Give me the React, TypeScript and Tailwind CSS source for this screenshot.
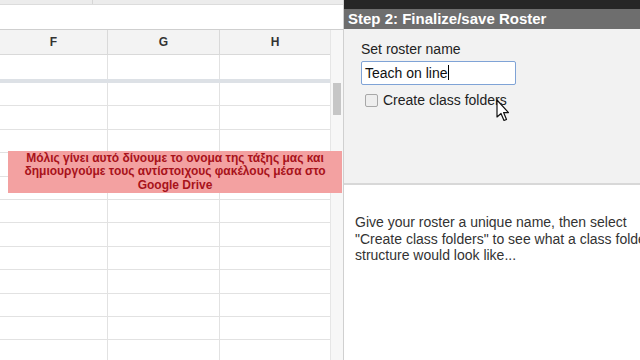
import React from 'react';

const rows = Array.from({ length: 12 });

const Cursor = () => (
  <svg width="16" height="24" viewBox="0 0 16 24" className="absolute left-[496px] top-[99px]">
    <path
      d="M1 1 L1 18 L5 14.5 L8 21.5 L10.5 20.5 L7.6 13.6 L12.5 13.6 Z"
      fill="#fff"
      stroke="#111"
      strokeWidth="1.2"
      strokeLinejoin="round"
    />
  </svg>
);

export default function App() {
  return (
    <div className="relative w-[640px] h-[360px] overflow-hidden bg-white flex font-['Liberation_Sans',Arial,sans-serif]">
      {/* sheet side */}
      <div className="w-[343px] flex flex-col shrink-0">
        <div className="h-[5px] shrink-0 bg-[#ececec] border-b border-[#dcdcdc] flex">
          <div className="w-[93px] border-r border-[#d6d6d6]" />
        </div>
        <div className="h-[25px] shrink-0 bg-white border-b border-[#cfcfcf]" />
        <div className="flex-1 min-h-0 overflow-hidden flex">
          <div className="flex-1 flex flex-col">
            <div className="h-[25px] shrink-0 bg-[#f3f3f3] border-b border-[#d9d9d9] flex text-[12px] font-bold text-[#333]">
              <div className="w-[108px] border-r border-[#d9d9d9] flex items-center justify-center">F</div>
              <div className="w-[112px] border-r border-[#d9d9d9] flex items-center justify-center">G</div>
              <div className="flex-1 flex items-center justify-center">H</div>
            </div>
            <div className="h-[28px] shrink-0 flex border-b-4 border-[#dde1e6]">
              <div className="w-[108px] border-r border-[#e2e2e2]" />
              <div className="w-[112px] border-r border-[#e2e2e2]" />
              <div className="flex-1" />
            </div>
            {rows.map((_, i) => (
              <div key={i} className="h-[23.4px] shrink-0 flex border-b border-[#e2e2e2]">
                <div className="w-[108px] border-r border-[#e2e2e2]" />
                <div className="w-[112px] border-r border-[#e2e2e2]" />
                <div className="flex-1" />
              </div>
            ))}
          </div>
          <div className="w-[13px] bg-[#f7f7f7] border-l border-[#e6e6e6] flex flex-col">
            <div className="h-[53px] shrink-0" />
            <div className="mx-[2px] h-[32px] shrink-0 bg-[#c6c6c6]" />
          </div>
        </div>
      </div>

      {/* side panel */}
      <div className="flex-1 flex flex-col border-l border-[#d0d0d0] min-w-0">
        <div className="h-[9px] shrink-0 bg-[#262626]" />
        <div className="h-[20px] shrink-0 bg-[#6e6e6e] text-white font-bold text-[15px] leading-[20px] pl-[4px] whitespace-nowrap">
          Step 2: Finalize/save Roster
        </div>
        <div className="h-[156px] shrink-0 bg-[#f2f2f2] border-b-2 border-[#d8d8d8] pl-[17px] pt-[11px] text-[14px] text-[#222]">
          <div className="leading-[18px]">Set roster name</div>
          <div className="mt-[3px] w-[155px] h-[24px] border border-[#7fa3d6] rounded-[2px] bg-white pl-[3px] leading-[22px] text-[14px] text-[#111]">
            Teach on line<span className="inline-block w-px h-[15px] bg-black align-[-2px]" />
          </div>
          <div className="mt-[7px] flex items-center pl-[4px]">
            <div className="w-[13px] h-[13px] border border-[#a8a8a8] rounded-[2px] bg-[#eeeeee]" />
            <span className="ml-[5px] leading-[16px]">Create class folders</span>
          </div>
        </div>
        <div className="pt-[29px] pl-[11px] text-[14px] leading-[16.5px] text-[#333] whitespace-nowrap">
          Give your roster a unique name, then select
          <br />
          "Create class folders" to see what a class folder
          <br />
          structure would look like...
        </div>
      </div>

      {/* caption overlay */}
      <div className="absolute left-[8px] top-[151px] w-[334px] h-[42px] bg-[#f3a1a1] flex items-center justify-center text-center text-[12px] leading-[13.5px] font-bold text-[#a8121a]">
        Μόλις γίνει αυτό δίνουμε το ονομα της τάξης μας και
        <br />
        δημιουργούμε τους αντίστοιχους φακέλους μέσα στο
        <br />
        Google Drive
      </div>

      <Cursor />
    </div>
  );
}
